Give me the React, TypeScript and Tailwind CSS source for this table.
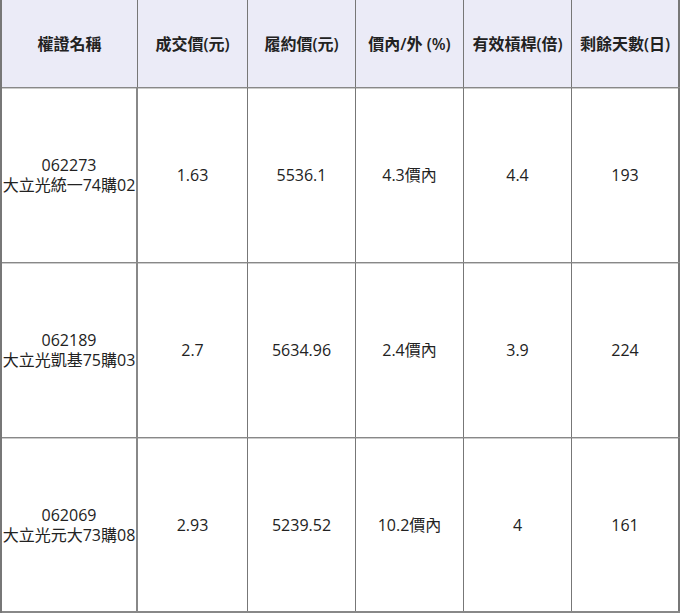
const headers = ["權證名稱", "成交價(元)", "履約價(元)", "價內/外 (%)", "有效槓桿(倍)", "剩餘天數(日)"];

const rows = [
  { code: "062273", name: "大立光統一74購02", price: "1.63", strike: "5536.1", moneyness: "4.3價內", leverage: "4.4", days: "193" },
  { code: "062189", name: "大立光凱基75購03", price: "2.7", strike: "5634.96", moneyness: "2.4價內", leverage: "3.9", days: "224" },
  { code: "062069", name: "大立光元大73購08", price: "2.93", strike: "5239.52", moneyness: "10.2價內", leverage: "4", days: "161" },
];

const cols = "grid grid-cols-[136px_110px_108px_108px_108px_108px]";

export default function App() {
  return (
    <div
      className="w-[680px] h-[614px] bg-white text-[#222]"
      style={{ fontFamily: '"Open Sans", "Noto Sans CJK TC", sans-serif' }}
    >
      <div className="border-l-2 border-[#777] w-[680px]">
        <div className={`${cols} h-[88px] bg-[#ebebf7] border-b border-[#888] shadow-[0_1px_0_#ccc]`}>
          {headers.map((h) => (
            <div key={h} className="flex items-center justify-center border-r border-[#777] last:border-r-2 text-[16px] font-semibold whitespace-nowrap">
              {h}
            </div>
          ))}
        </div>
        {rows.map((r) => (
          <div key={r.code} className={`${cols} h-[175px] border-b border-[#888] shadow-[0_1px_0_#ccc] last:shadow-none last:border-b-2`}>
            <div className="flex flex-col items-center justify-center border-r-2 border-[#888] text-[16px] leading-[20px] whitespace-nowrap">
              <span>{r.code}</span>
              <span>{r.name}</span>
            </div>
            <div className="flex items-center justify-center border-r border-[#777] text-[16px]">{r.price}</div>
            <div className="flex items-center justify-center border-r border-[#777] text-[16px]">{r.strike}</div>
            <div className="flex items-center justify-center border-r border-[#777] text-[16px]">{r.moneyness}</div>
            <div className="flex items-center justify-center border-r border-[#777] text-[16px]">{r.leverage}</div>
            <div className="flex items-center justify-center border-r-2 border-[#777] text-[16px]">{r.days}</div>
          </div>
        ))}
      </div>
    </div>
  );
}
